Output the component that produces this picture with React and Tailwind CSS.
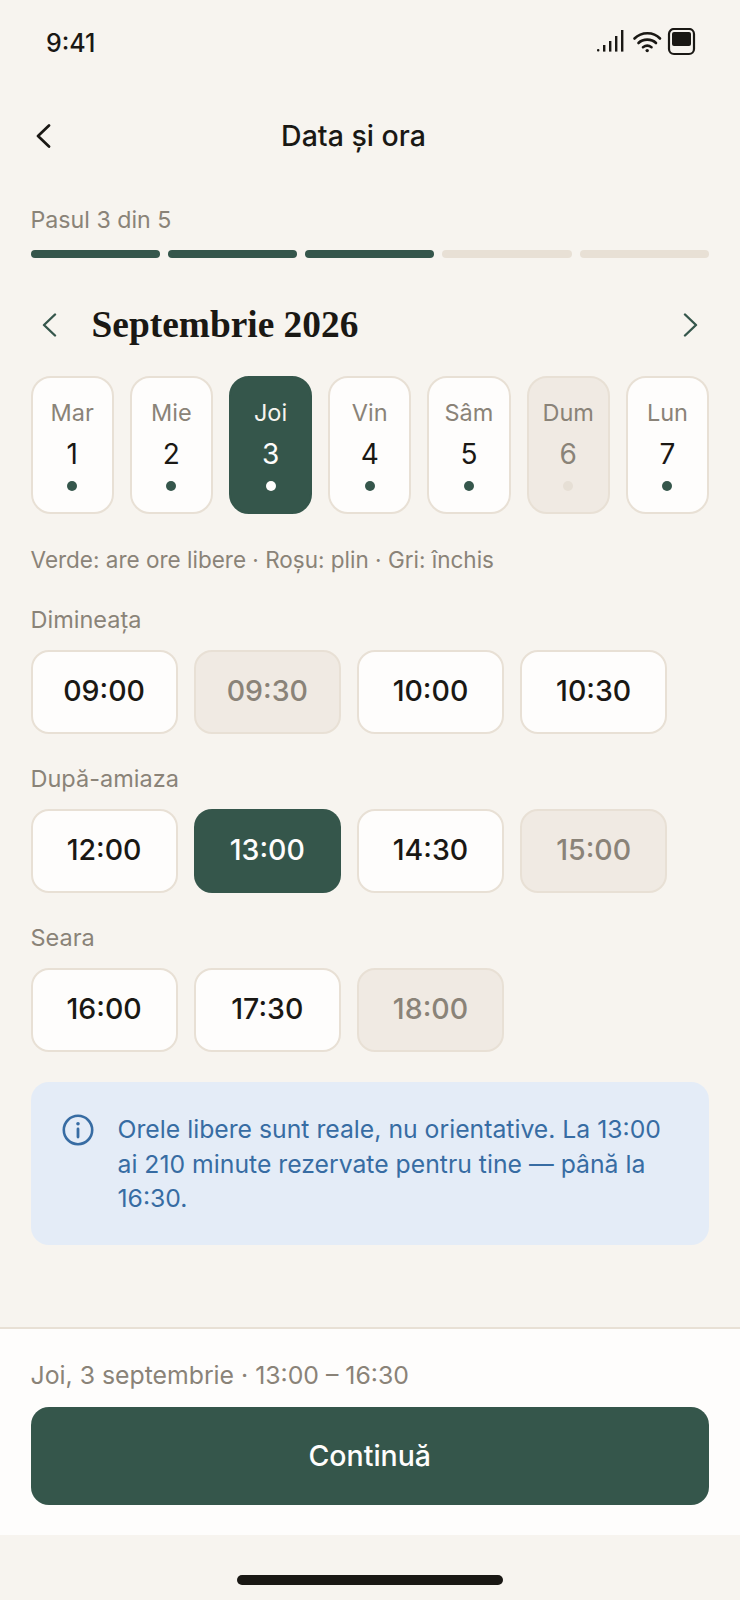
const days = [
  { label: "Mar", num: 1 },
  { label: "Mie", num: 2 },
  { label: "Joi", num: 3, selected: true },
  { label: "Vin", num: 4 },
  { label: "Sâm", num: 5 },
  { label: "Dum", num: 6, closed: true },
  { label: "Lun", num: 7 },
];

const slotGroups = [
  {
    title: "Dimineața",
    slots: [{ time: "09:00" }, { time: "09:30", off: true }, { time: "10:00" }, { time: "10:30" }],
  },
  {
    title: "După-amiaza",
    slots: [{ time: "12:00" }, { time: "13:00", selected: true }, { time: "14:30" }, { time: "15:00", off: true }],
  },
  {
    title: "Seara",
    slots: [{ time: "16:00" }, { time: "17:30" }, { time: "18:00", off: true }],
  },
];

function StatusIcons() {
  return (
    <svg width="100" height="28" viewBox="0 0 100 28" fill="none" className="block">
      <g fill="#1a1814">
        <rect x="0" y="21" width="2.4" height="2.6" rx="1" />
        <rect x="6" y="17" width="2.4" height="6.6" />
        <rect x="12" y="13" width="2.4" height="10.6" />
        <rect x="18" y="8" width="2.4" height="15.6" />
        <rect x="24" y="2" width="2.4" height="21.6" />
      </g>
      <g stroke="#1a1814" strokeWidth="2.6" strokeLinecap="round">
        <path d="M37.5 10.5C44.5 3.5 56.5 3.5 63 10.5" />
        <path d="M41.5 15C46 10.5 54.5 10.5 59 15" />
        <path d="M46 19.2C48.5 17.4 52 17.4 54.5 19.2" />
      </g>
      <circle cx="50.2" cy="22.6" r="1.7" fill="#1a1814" />
      <rect x="72" y="1" width="25" height="25" rx="5" stroke="#1a1814" strokeWidth="2.2" />
      <rect x="75" y="4" width="19" height="14" rx="2" fill="#1a1814" />
    </svg>
  );
}

function DayCard({ day }) {
  const box = day.selected
    ? "bg-[#35564b] border-[#35564b]"
    : day.closed
      ? "bg-[#f0eae3] border-[#e8e0d5]"
      : "bg-[#fefdfc] border-[#e8e0d5]";

  return (
    <div className={`flex-1 h-[138px] rounded-[20px] border-2 flex flex-col items-center ${box}`}>
      <span className={`mt-[17px] h-[36px] leading-[36px] text-[23.5px] ${day.selected ? "text-[#f7f4ef]" : "text-[#8a8378]"}`}>
        {day.label}
      </span>
      <span
        className={`mt-[4px] h-[38px] leading-[38px] text-[28px] ${
          day.selected ? "text-[#fefdfc]" : day.closed ? "text-[#8a8378]" : "text-[#1a1814]"
        }`}
      >
        {day.num}
      </span>
      <span
        className={`mt-[8px] size-[10px] rounded-full ${
          day.selected ? "bg-[#fefdfc]" : day.closed ? "bg-[#e6dfd5]" : "bg-[#35564b]"
        }`}
      />
    </div>
  );
}

function Slot({ slot }) {
  const box = slot.selected
    ? "bg-[#35564b] text-[#fefdfc]"
    : slot.off
      ? "bg-[#f0eae3] border-2 border-[#e8e0d5] text-[#8a8378]"
      : "bg-[#fefdfc] border-2 border-[#e8e0d5] text-[#1a1814]";

  return (
    <div className={`w-[147.2px] h-[83.5px] rounded-[18px] flex items-center justify-center text-[28.5px] font-[450] ${box}`}>
      {slot.time}
    </div>
  );
}

export default function App() {
  return (
    <div
      className="w-[740px] h-[1600px] bg-[#f7f4ef] flex flex-col overflow-hidden text-[#1a1814]"
      style={{ fontFamily: "Inter, 'Liberation Sans', sans-serif" }}
    >
      <div className="h-[84px] pl-[46px] pr-[43px] flex items-center justify-between">
        <span className="pt-[3px] text-[25px] font-[450]">9:41</span>
        <StatusIcons />
      </div>

      <div className="h-[104px] pl-[36px] pr-[68px] flex items-center justify-between">
        <svg width="15" height="24" viewBox="0 0 15 24" fill="none">
          <path d="M13 1.5L2 12L13 22.5" stroke="#1a1814" strokeWidth="2.7" strokeLinecap="round" strokeLinejoin="round" />
        </svg>
        <h1 className="text-[28.5px] font-[450]">Data și ora</h1>
        <span className="w-[16px]" />
      </div>

      <div className="pl-[30.5px] pr-[31px] flex flex-col flex-1">
        <div className="mt-[17px] text-[23.2px] leading-[30px] text-[#8a8378]">Pasul 3 din 5</div>
        <div className="mt-[15px] flex gap-[8px]">
          {[1, 2, 3, 4, 5].map((step) => (
            <div key={step} className={`flex-1 h-[8px] rounded-full ${step <= 3 ? "bg-[#35564b]" : "bg-[#e8e0d5]"}`} />
          ))}
        </div>

        <div className="mt-[47px] h-[40px] flex items-center">
          <svg width="15" height="24" viewBox="0 0 15 24" fill="none" className="ml-[11px]">
            <path d="M13 1.5L2 12L13 22.5" stroke="#35564b" strokeWidth="2.4" strokeLinecap="round" strokeLinejoin="round" />
          </svg>
          <h2
            className="ml-[35px] text-[37.4px] font-bold text-[#1a1814]"
            style={{ fontFamily: "'Liberation Serif', serif" }}
          >
            Septembrie 2026
          </h2>
          <svg width="15" height="24" viewBox="0 0 15 24" fill="none" className="ml-auto mr-[11px]">
            <path d="M2 1.5L13 12L2 22.5" stroke="#35564b" strokeWidth="2.4" strokeLinecap="round" strokeLinejoin="round" />
          </svg>
        </div>

        <div className="mt-[31px] flex gap-[16px]">
          {days.map((day) => (
            <DayCard key={day.num} day={day} />
          ))}
        </div>

        <p className="mt-[30.5px] text-[22.5px] leading-[30px] text-[#8a8378]">
          Verde: are ore libere · Roșu: plin · Gri: închis
        </p>

        <div className="mt-[30.5px] flex flex-col gap-[30.5px]">
          {slotGroups.map((group) => (
            <section key={group.title}>
              <h3 className="text-[23.5px] leading-[30px] text-[#8a8378]">{group.title}</h3>
              <div className="mt-[15px] flex gap-[16px]">
                {group.slots.map((slot) => (
                  <Slot key={slot.time} slot={slot} />
                ))}
              </div>
            </section>
          ))}
        </div>

        <div className="mt-[30px] h-[163.5px] rounded-[18px] bg-[#e4ecf7] pl-[31px] pr-[40px] pt-[30.5px] flex gap-[24px]">
          <svg width="32" height="32" viewBox="0 0 32 32" fill="none" className="shrink-0 mt-[1.5px]">
            <circle cx="16" cy="16" r="14.2" stroke="#376ca3" strokeWidth="2.6" />
            <path d="M16 15V23" stroke="#376ca3" strokeWidth="2.8" strokeLinecap="round" />
            <circle cx="16" cy="9.8" r="1.8" fill="#376ca3" />
          </svg>
          <p className="text-[24.75px] leading-[34.5px] text-[#376ca3]">
            Orele libere sunt reale, nu orientative. La 13:00 ai 210 minute rezervate pentru tine — până la 16:30.
          </p>
        </div>
      </div>

      <div className="h-[208px] bg-[#fefdfc] border-t-2 border-[#e8e0d5] pl-[30.5px] pr-[31px] pt-[30px]">
        <p className="text-[24.8px] leading-[32px] text-[#8a8378]">Joi, 3 septembrie · 13:00 – 16:30</p>
        <button className="mt-[16px] w-full h-[98px] rounded-[18px] bg-[#35564b] text-[#fefdfc] text-[28.5px] font-[450]">
          Continuă
        </button>
      </div>

      <div className="h-[65px] flex justify-center pt-[40px]">
        <div className="w-[266px] h-[10px] rounded-full bg-[#1a1814]" />
      </div>
    </div>
  );
}
